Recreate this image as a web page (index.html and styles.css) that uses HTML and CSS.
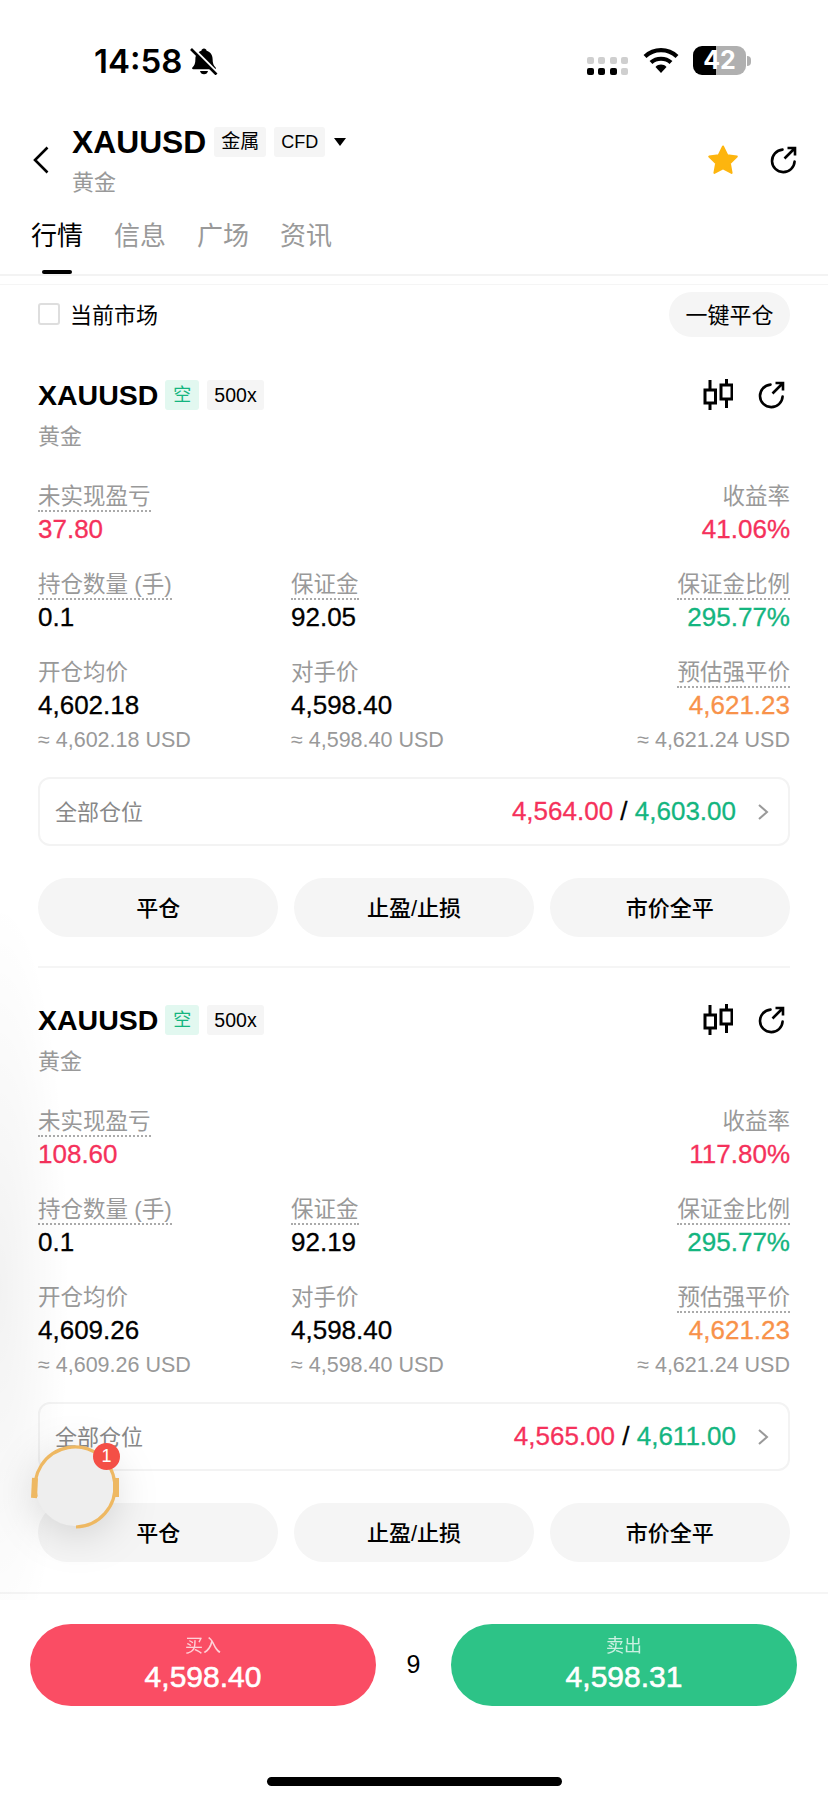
FILE: index.html
```html
<!DOCTYPE html>
<html lang="zh-CN">
<head>
    <meta charset="UTF-8">
    <meta name="viewport" content="width=device-width, initial-scale=1.0">
    <title>XAUUSD 黄金</title>
    <link rel="stylesheet" href="styles.css">
</head>
<body>
    <svg class="sprites" width="0" height="0">
        <symbol id="icon-share" viewBox="0 0 28 28">
            <path d="M13.5 3.6A11.3 11.3 0 1 0 25.6 15.5" fill="none" stroke="currentColor" stroke-width="2.6" stroke-linecap="round"/>
            <path d="M15.5 12.5L25.5 2.5M18.5 2H26V9.5" fill="none" stroke="currentColor" stroke-width="2.6"/>
        </symbol>
        <symbol id="icon-candle" viewBox="0 0 30 32">
            <path d="M7 1V11M7 24V31M23.5 0V6M23.5 20V29" fill="none" stroke="currentColor" stroke-width="3"/>
            <rect x="2" y="11" width="10.5" height="13" fill="none" stroke="currentColor" stroke-width="3"/>
            <rect x="18" y="6" width="11" height="14" fill="none" stroke="currentColor" stroke-width="3"/>
        </symbol>
        <symbol id="icon-chevron" viewBox="0 0 12 18">
            <path d="M2 2L10 9L2 16" fill="none" stroke="currentColor" stroke-width="2"/>
        </symbol>
    </svg>

    <div class="page">
        <div class="status-bar">
            <div class="status-left">
                <span class="clock">14:58</span>
                <svg class="bell" viewBox="0 0 28 28">
                    <path d="M14 1.5c1.5 0 2.400 1 2.600 2.200 3.800 1 6 4.200 6 8.300 0 4.500 1 6.500 3 8.500 .6 .7 .2 1.800-.8 1.800H3.200c-1 0-1.400-1.100-.8-1.800 2-2 3-4 3-8.500 0-4.100 2.200-7.300 6-8.300C11.600 2.500 12.500 1.500 14 1.500z"/>
                    <path d="M10 24h8c-.3 2-2 3.300-4 3.300s-3.700-1.300-4-3.300z"/>
                    <path d="M2.500 1L27.500 26" stroke="#fff" stroke-width="3"/>
                    <path d="M1 2L26.500 27.500" stroke="#000" stroke-width="2.600"/>
                </svg>
            </div>
            <div class="status-right">
                <div class="signal">
                    <i></i><i></i><i></i><i></i>
                    <i class="on"></i><i class="on"></i><i class="on"></i><i></i>
                </div>
                <svg class="wifi" viewBox="0 0 36 26">
                    <path d="M2 9.500C11 1 25 1 34 9.500" fill="none" stroke="#000" stroke-width="4.200"/>
                    <path d="M8 15.500C13.500 10.500 22.500 10.500 28 15.500" fill="none" stroke="#000" stroke-width="4.200"/>
                    <path d="M12.500 20C15.500 16.800 20.500 16.800 23.500 20L18 26z"/>
                </svg>
                <div class="battery">42</div>
                <div class="battery-nub"></div>
            </div>
        </div>

        <header class="nav">
            <svg class="back" viewBox="0 0 16 28">
                <path d="M14.500 1.500L2 14L14.500 26.500" fill="none" stroke="#000" stroke-width="2.600"/>
            </svg>
            <div class="nav-title">
                <div class="nav-top">
                    <h1 class="symbol">XAUUSD</h1>
                    <span class="tag tag-cn">金属</span>
                    <span class="tag">CFD</span>
                    <span class="caret"></span>
                </div>
                <div class="nav-sub">黄金</div>
            </div>
            <svg class="star" viewBox="0 0 32 32">
                <path d="M16 2.500L20.300 11.300L29.800 12.600L22.900 19.300L24.600 28.900L16 24.300L7.400 28.900L9.100 19.300L2.200 12.600L11.700 11.300z" fill="#fdb50e" stroke="#fdb50e" stroke-width="2" stroke-linejoin="round"/>
            </svg>
            <svg class="icon-share nav-share"><use href="#icon-share"/></svg>
        </header>

        <nav class="tabs">
            <div class="tab active">行情<span class="tab-bar"></span></div>
            <div class="tab">信息</div>
            <div class="tab">广场</div>
            <div class="tab">资讯</div>
        </nav>

        <div class="toolbar">
            <label class="check"><span class="check-box"></span><span class="cjk-up">当前市场</span></label>
            <button class="close-all">一键平仓</button>
        </div>

        <section class="position">
            <div class="pos-head">
                <span class="pos-symbol">XAUUSD</span>
                <span class="tag tag-short">空</span>
                <span class="tag tag-lev">500x</span>
                <span class="pos-icons">
                    <svg class="icon-candle"><use href="#icon-candle"/></svg>
                    <svg class="icon-share"><use href="#icon-share"/></svg>
                </span>
            </div>
            <div class="pos-name">黄金</div>
            <div class="stats">
                <div class="stat">
                    <span class="label dotted">未实现盈亏</span>
                    <span class="value red">37.80</span>
                </div>
                <div class="stat"></div>
                <div class="stat right">
                    <span class="label">收益率</span>
                    <span class="value red">41.06%</span>
                </div>
                <div class="stat">
                    <span class="label dotted">持仓数量 (手)</span>
                    <span class="value">0.1</span>
                </div>
                <div class="stat">
                    <span class="label dotted">保证金</span>
                    <span class="value">92.05</span>
                </div>
                <div class="stat right">
                    <span class="label dotted">保证金比例</span>
                    <span class="value green">295.77%</span>
                </div>
                <div class="stat">
                    <span class="label">开仓均价</span>
                    <span class="value">4,602.18</span>
                    <span class="approx">≈ 4,602.18 USD</span>
                </div>
                <div class="stat">
                    <span class="label">对手价</span>
                    <span class="value">4,598.40</span>
                    <span class="approx">≈ 4,598.40 USD</span>
                </div>
                <div class="stat right">
                    <span class="label dotted">预估强平价</span>
                    <span class="value orange">4,621.23</span>
                    <span class="approx">≈ 4,621.24 USD</span>
                </div>
            </div>
            <div class="all-pos">
                <span class="all-label">全部仓位</span>
                <span class="all-values"><span class="red">4,564.00</span> / <span class="green">4,603.00</span></span>
                <svg class="chevron"><use href="#icon-chevron"/></svg>
            </div>
            <div class="actions">
                <button class="action">平仓</button>
                <button class="action">止盈/止损</button>
                <button class="action">市价全平</button>
            </div>
        </section>

        <section class="position last">
            <div class="pos-head">
                <span class="pos-symbol">XAUUSD</span>
                <span class="tag tag-short">空</span>
                <span class="tag tag-lev">500x</span>
                <span class="pos-icons">
                    <svg class="icon-candle"><use href="#icon-candle"/></svg>
                    <svg class="icon-share"><use href="#icon-share"/></svg>
                </span>
            </div>
            <div class="pos-name">黄金</div>
            <div class="stats">
                <div class="stat">
                    <span class="label dotted">未实现盈亏</span>
                    <span class="value red">108.60</span>
                </div>
                <div class="stat"></div>
                <div class="stat right">
                    <span class="label">收益率</span>
                    <span class="value red">117.80%</span>
                </div>
                <div class="stat">
                    <span class="label dotted">持仓数量 (手)</span>
                    <span class="value">0.1</span>
                </div>
                <div class="stat">
                    <span class="label dotted">保证金</span>
                    <span class="value">92.19</span>
                </div>
                <div class="stat right">
                    <span class="label dotted">保证金比例</span>
                    <span class="value green">295.77%</span>
                </div>
                <div class="stat">
                    <span class="label">开仓均价</span>
                    <span class="value">4,609.26</span>
                    <span class="approx">≈ 4,609.26 USD</span>
                </div>
                <div class="stat">
                    <span class="label">对手价</span>
                    <span class="value">4,598.40</span>
                    <span class="approx">≈ 4,598.40 USD</span>
                </div>
                <div class="stat right">
                    <span class="label dotted">预估强平价</span>
                    <span class="value orange">4,621.23</span>
                    <span class="approx">≈ 4,621.24 USD</span>
                </div>
            </div>
            <div class="all-pos">
                <span class="all-label">全部仓位</span>
                <span class="all-values"><span class="red">4,565.00</span> / <span class="green">4,611.00</span></span>
                <svg class="chevron"><use href="#icon-chevron"/></svg>
            </div>
            <div class="actions">
                <button class="action">平仓</button>
                <button class="action">止盈/止损</button>
                <button class="action">市价全平</button>
            </div>
        </section>

        <footer class="trade-bar">
            <button class="trade buy"><span class="trade-label">买入</span><span class="trade-price">4,598.40</span></button>
            <span class="spread">9</span>
            <button class="trade sell"><span class="trade-label">卖出</span><span class="trade-price">4,598.31</span></button>
        </footer>
        <div class="home-bar"></div>

        <!-- floating ball over the content -->
        <div class="edge-shade"></div>
        <div class="ball">
            <svg class="ball-ring" viewBox="0 0 90 90">
                <circle cx="45" cy="45" r="39" fill="#eeeeee"/>
                <path d="M46 85A40 40 0 1 0 6.200 55" fill="none" stroke="#eeb862" stroke-width="3.200"/>
                <path d="M5 36L4 56" fill="none" stroke="#eeb862" stroke-width="6"/>
                <path d="M86 36V55" fill="none" stroke="#eeb862" stroke-width="6"/>
            </svg>
            <span class="ball-badge">1</span>
        </div>
    </div>
</body>
</html>
```

FILE: styles.css
```css
* {
    box-sizing: border-box;
}

html, body {
    margin: 0;
    background: #fff;
}

body {
    font-family: "Liberation Sans", "Noto Sans CJK SC", sans-serif;
    color: #000;
}

button {
    font-family: inherit;
    border: none;
    padding: 0;
    color: #000;
}

.sprites {
    display: block;
    height: 0;
}

.page {
    position: relative;
    width: 828px;
    height: 1800px;
    overflow: hidden;
    display: flex;
    flex-direction: column;
}

.red { color: #f5315b; }
.green { color: #14b57f; }
.orange { color: #f8924a; }

/* status bar */
.status-bar {
    height: 122px;
    flex: none;
    display: flex;
    justify-content: space-between;
    align-items: flex-start;
    padding: 44px 77px 0 94px;
}

.status-left {
    display: flex;
    align-items: center;
    gap: 8px;
}

.clock {
    font-family: Inter, sans-serif;
    font-size: 33px;
    line-height: 34px;
    font-weight: 600;
}

.bell {
    width: 28px;
    height: 28px;
}

.status-right {
    display: flex;
    align-items: flex-start;
    padding-top: 2px;
}

.signal {
    display: grid;
    grid-template-columns: repeat(4, 7px);
    gap: 4px 4.500px;
    margin: 11px 15px 0 0;
}

.signal i {
    width: 7px;
    height: 7px;
    border-radius: 2px;
    background: #cfcfcf;
}

.signal i.on {
    background: #000;
}

.wifi {
    width: 36px;
    height: 26px;
    margin: 1px 14px 0 0;
}

.battery {
    width: 53px;
    height: 29px;
    border-radius: 9px;
    background: linear-gradient(to right, #000 23px, #b0b0b0 23px);
    color: #fff;
    font-family: Inter, sans-serif;
    font-size: 25px;
    line-height: 29px;
    font-weight: 700;
    text-align: center;
}

.battery-nub {
    width: 4px;
    height: 10px;
    margin: 10px 0 0 1px;
    border-radius: 0 4px 4px 0;
    background: #b0b0b0;
}

/* nav */
.nav {
    height: 88px;
    flex: none;
    display: flex;
    align-items: flex-start;
    padding: 0 31px 0 33px;
}

.back {
    width: 16px;
    height: 28px;
    margin-top: 24px;
    flex: none;
}

.nav-title {
    margin-left: 23px;
    flex: 1;
}

.nav-top {
    display: flex;
    align-items: center;
    height: 40px;
}

.symbol {
    margin: 0;
    font-size: 31.800px;
    font-weight: 700;
    line-height: 40px;
}

.tag {
    display: inline-block;
    height: 30px;
    padding: 0 7px;
    border-radius: 3px;
    background: #f5f5f5;
    font-size: 18px;
    line-height: 30px;
}

.nav-top .tag {
    margin-left: 8px;
}

.tag-cn {
    font-size: 19px;
}

.caret {
    margin-left: 9px;
    width: 0;
    height: 0;
    border-left: 6.500px solid transparent;
    border-right: 6.500px solid transparent;
    border-top: 8px solid #000;
}

.nav-sub {
    margin-top: 6px;
    font-size: 22px;
    line-height: 30px;
    color: #999;
}

.star {
    width: 32px;
    height: 32px;
    margin: 22px 30px 0 0;
    flex: none;
}

.icon-share {
    width: 28px;
    height: 28px;
    flex: none;
}

.nav-share {
    margin-top: 24px;
}

/* tabs */
.tabs {
    height: 66px;
    flex: none;
    display: flex;
    gap: 31px;
    padding-left: 31px;
    border-bottom: 2px solid #f3f3f3;
}

.tab {
    display: flex;
    flex-direction: column;
    align-items: center;
    font-size: 26px;
    line-height: 52px;
    color: #999;
}

.tab.active {
    color: #000;
}

.tab-bar {
    width: 30px;
    height: 4px;
    margin-top: 8px;
    border-radius: 2px;
    background: #000;
}

/* toolbar */
.toolbar {
    height: 59px;
    flex: none;
    margin-top: 8px;
    border-top: 1px solid #f5f5f5;
    display: flex;
    justify-content: space-between;
    align-items: center;
    padding: 0 38px;
}

.check {
    display: flex;
    align-items: center;
    gap: 10px;
    font-size: 22px;
}

.cjk-up {
    padding-bottom: 3px;
}

.check-box {
    width: 22px;
    height: 22px;
    border: 2px solid #dedede;
    border-radius: 3px;
}

.close-all {
    width: 121px;
    height: 45px;
    padding-bottom: 3px;
    border-radius: 23px;
    background: #f5f5f5;
    font-size: 22px;
}

/* position card */
.position {
    flex: none;
    height: 625px;
    margin: 0 38px;
    padding-top: 37px;
    border-bottom: 2px solid #f5f5f5;
}

.position.last {
    height: 624px;
    border-bottom: none;
}

.pos-head {
    display: flex;
    align-items: center;
    height: 30px;
}

.pos-symbol {
    font-size: 28.500px;
    font-weight: 700;
    line-height: 30px;
    margin-right: 7px;
}

.tag-short {
    background: #e2f8f0;
    color: #14b57f;
    padding: 0 8px;
    font-size: 18px;
    margin-right: 8px;
}

.tag-lev {
    font-size: 19.500px;
}

.pos-icons {
    margin-left: auto;
    display: flex;
    align-items: center;
    gap: 24px;
    padding-right: 5px;
}

.icon-candle {
    width: 30px;
    height: 32px;
}

.pos-name {
    margin-top: 12px;
    font-size: 22px;
    line-height: 30px;
    color: #999;
}

.stats {
    display: grid;
    grid-template-columns: 253px 1fr auto;
    grid-auto-rows: min-content;
    row-gap: 25px;
    margin-top: 30px;
}

.stat {
    display: flex;
    flex-direction: column;
    align-items: flex-start;
}

.stat.right {
    align-items: flex-end;
}

.label {
    font-size: 22.500px;
    line-height: 30px;
    color: #999;
}

.dotted {
    border-bottom: 2px dotted #aaa;
    height: 30px;
}

.value {
    margin-top: 2px;
    font-size: 26px;
    line-height: 31px;
    -webkit-text-stroke: 0.3px currentColor;
}

.approx {
    font-size: 21.500px;
    line-height: 30px;
    color: #999;
    margin-top: 4px;
}

.all-pos {
    height: 69px;
    margin-top: 22px;
    padding: 0 19px 0 15px;
    border: 2px solid #f3f3f3;
    border-radius: 12px;
    display: flex;
    align-items: center;
}

.all-label {
    padding-bottom: 3px;
    font-size: 22px;
    color: #888;
}

.all-values {
    margin-left: auto;
    font-size: 26px;
    -webkit-text-stroke: 0.3px currentColor;
}

.chevron {
    width: 12px;
    height: 18px;
    margin-left: 21px;
    color: #999;
}

.actions {
    display: flex;
    gap: 15.500px;
    margin-top: 32px;
}

.action {
    flex: 1;
    height: 59px;
    padding-bottom: 3px;
    border-radius: 30px;
    background: #f5f5f5;
    font-size: 22px;
    font-weight: 500;
}

/* trade bar */
.trade-bar {
    flex: none;
    display: flex;
    justify-content: space-between;
    align-items: center;
    padding: 30px 31px 0 30px;
    border-top: 2px solid #f5f5f5;
}

.trade {
    width: 346px;
    height: 82px;
    border-radius: 41px;
    color: #fff;
    display: flex;
    flex-direction: column;
    align-items: center;
    padding-top: 9px;
}

.buy { background: #fa4d64; }
.sell { background: #2dc387; }

.trade-label {
    font-size: 18px;
    line-height: 26px;
    opacity: 0.75;
}

.trade-price {
    font-size: 30px;
    line-height: 36px;
    -webkit-text-stroke: 0.6px currentColor;
}

.spread {
    font-size: 25px;
    margin-top: -2px;
}

.home-bar {
    flex: none;
    width: 295px;
    height: 9px;
    margin: 71px 0 0 267px;
    border-radius: 5px;
    background: #000;
}

/* floating ball */
.edge-shade {
    position: absolute;
    left: 0;
    top: 820px;
    width: 90px;
    height: 780px;
    background: radial-gradient(ellipse 70px 390px at 0 60%, rgba(0, 0, 0, 0.05), rgba(0, 0, 0, 0));
}

.ball {
    position: absolute;
    left: 30px;
    top: 1442px;
    width: 90px;
    height: 90px;
}

.ball-ring {
    width: 90px;
    height: 90px;
    display: block;
    filter: drop-shadow(0 8px 20px rgba(0, 0, 0, 0.14));
}

.ball-badge {
    position: absolute;
    left: 63px;
    top: 1px;
    width: 27px;
    height: 27px;
    border-radius: 50%;
    background: #f44f46;
    color: #fff;
    font-size: 18px;
    line-height: 27px;
    text-align: center;
}
```
